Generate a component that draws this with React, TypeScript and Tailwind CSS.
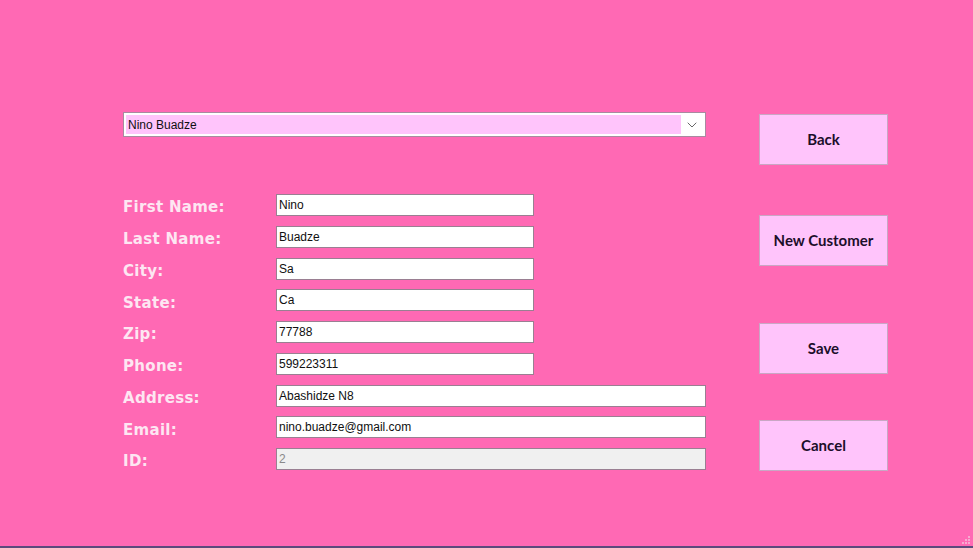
import { ChevronDown } from "lucide-react";

const fields = [
  { label: "First Name:", value: "Nino", wide: false },
  { label: "Last Name:", value: "Buadze", wide: false },
  { label: "City:", value: "Sa", wide: false },
  { label: "State:", value: "Ca", wide: false },
  { label: "Zip:", value: "77788", wide: false },
  { label: "Phone:", value: "599223311", wide: false },
  { label: "Address:", value: "Abashidze N8", wide: true },
  { label: "Email:", value: "nino.buadze@gmail.com", wide: true },
  { label: "ID:", value: "2", wide: true, disabled: true },
];

const labelFont = { fontFamily: '"Comic Sans MS", "DejaVu Sans", sans-serif' };

function WinButton({ text, className }: { text: string; className?: string }) {
  return (
    <button
      className={`w-[129px] h-[51px] bg-[#ffc4fb] border border-[#c9a6c4] text-[15px] font-bold text-[#1c0e2a] font-['Lato',sans-serif] ${className ?? ""}`}
    >
      {text}
    </button>
  );
}

export default function App() {
  return (
    <div className="w-[973px] h-[548px] bg-[#ff69b4] border-b-2 border-[#5d4a7c] relative flex font-['Liberation_Sans',sans-serif]">
      {/* ── Left: combo + form ── */}
      <div className="pl-[123px] pt-[112px] flex flex-col">
        <div className="w-[583px] h-[25px] bg-white border border-[#a88aa0] flex items-center p-[2px]">
          <div className="flex-1 h-full bg-[#ffc4fb] flex items-center px-[2px] text-[12px] text-[#101010]">
            Nino Buadze
          </div>
          <div className="w-[22px] flex justify-center text-[#505050]">
            <ChevronDown size={16} strokeWidth={1.3} />
          </div>
        </div>

        <div className="mt-[57px] flex flex-col gap-[9.75px]">
          {fields.map((f) => (
            <div key={f.label} className="flex items-center h-[22px]">
              <span
                style={labelFont}
                className="w-[153px] pt-[5px] text-[15px] font-bold text-[#fde6f2] tracking-[0.3px]"
              >
                {f.label}
              </span>
              <div
                className={`h-[22px] border border-[#9a7f92] flex items-center px-[2px] text-[12px] ${
                  f.wide ? "w-[430px]" : "w-[258px]"
                } ${f.disabled ? "bg-[#f0f0f0] text-[#8a8a8a]" : "bg-white text-[#101010]"}`}
              >
                {f.value}
              </div>
            </div>
          ))}
        </div>
      </div>

      {/* ── Right: buttons ── */}
      <div className="ml-[53px] pt-[114px] flex flex-col">
        <WinButton text="Back" />
        <WinButton text="New Customer" className="mt-[50px]" />
        <WinButton text="Save" className="mt-[57px]" />
        <WinButton text="Cancel" className="mt-[46px]" />
      </div>

      {/* resize grip */}
      <div className="absolute right-[3px] bottom-[2px] grid grid-cols-3 gap-[1px] opacity-60">
        {[0, 0, 1, 0, 1, 1, 1, 1, 1].map((v, i) => (
          <span key={i} className={`w-[2px] h-[2px] ${v ? "bg-[#f3d6e6]" : ""}`} />
        ))}
      </div>
    </div>
  );
}
